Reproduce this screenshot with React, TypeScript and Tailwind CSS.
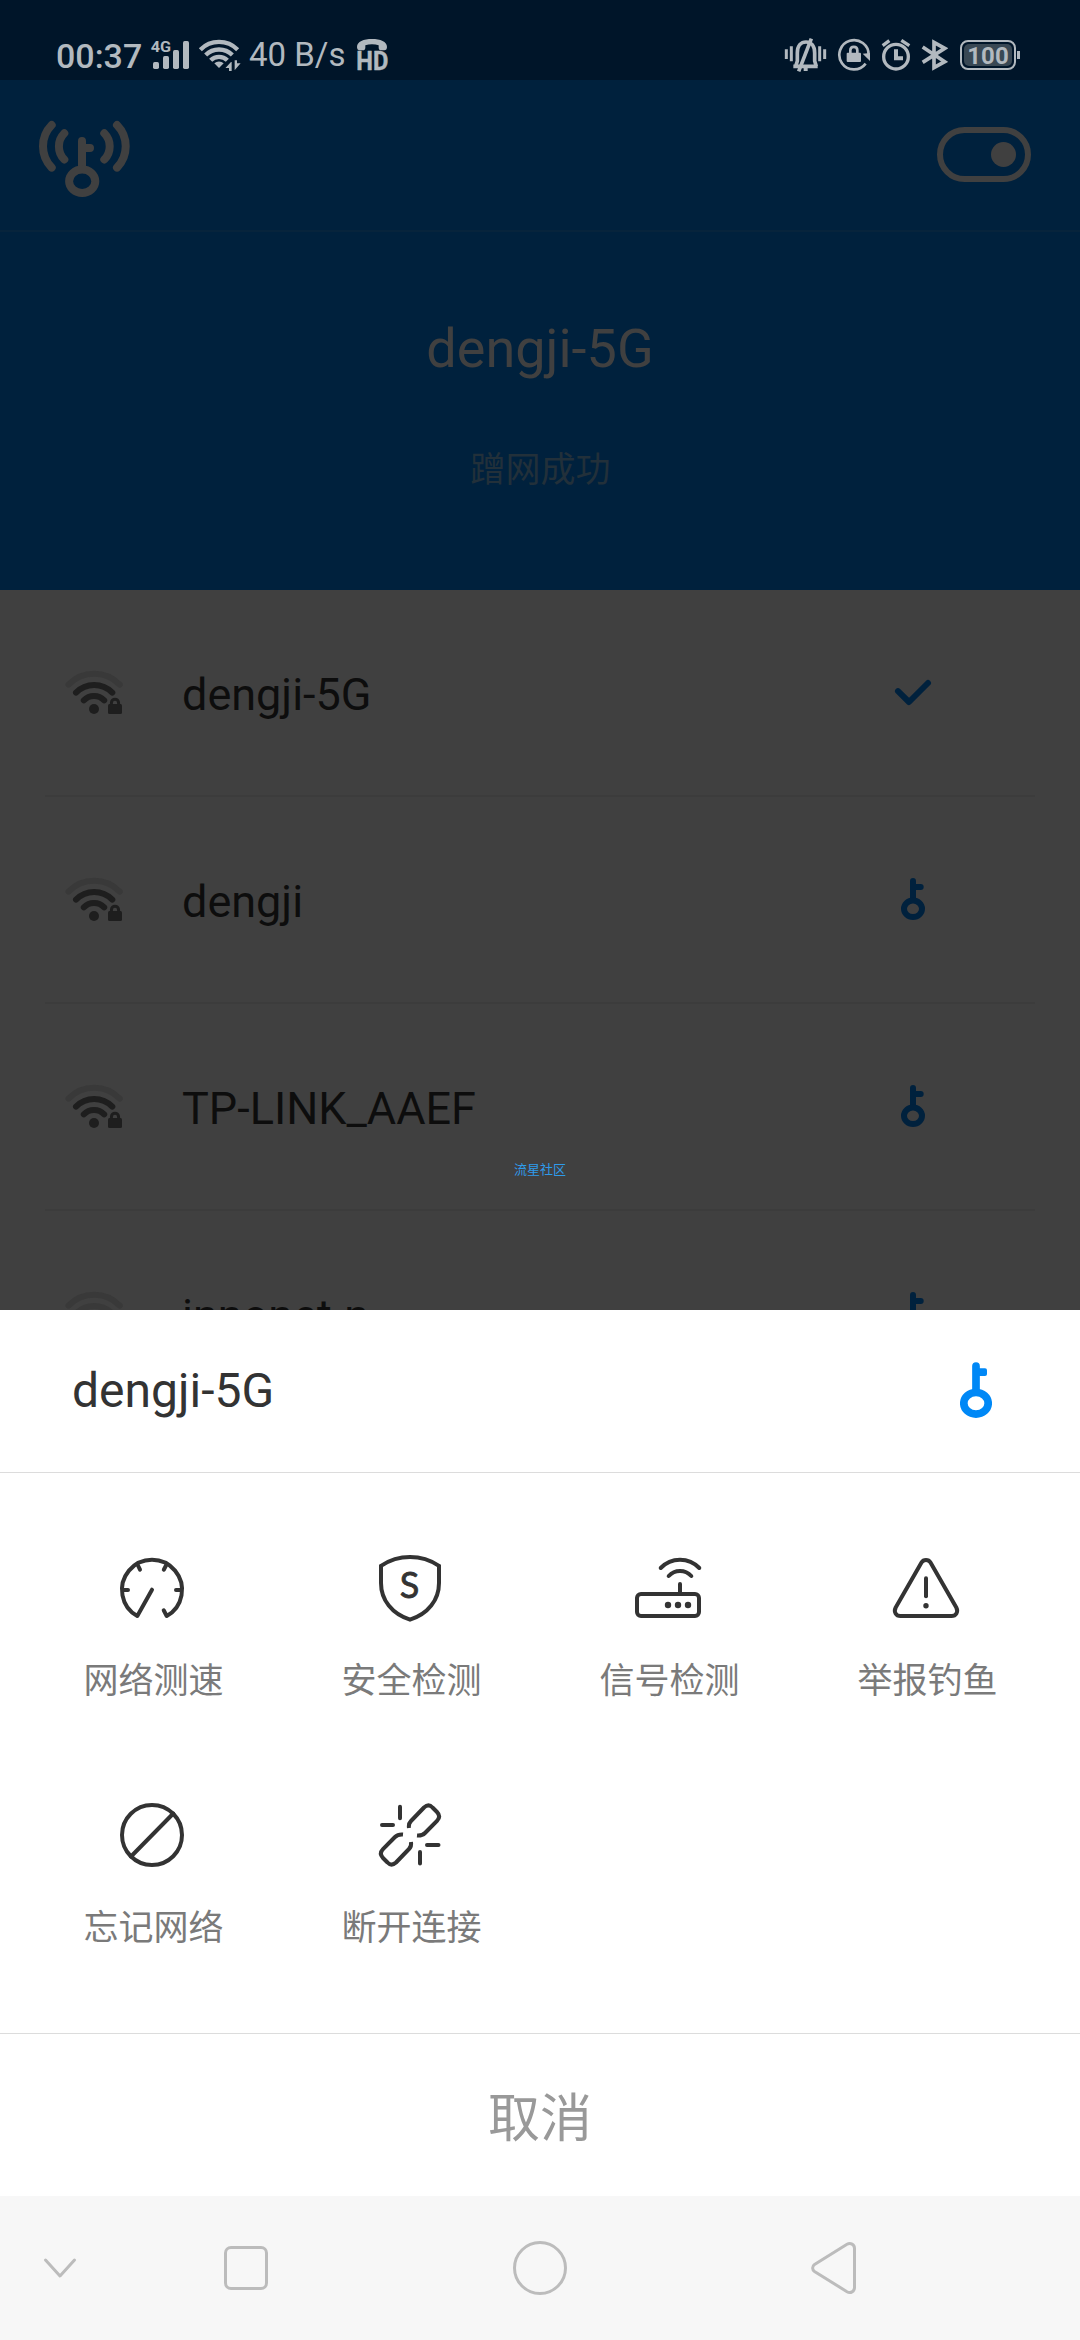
import type { ReactNode } from 'react'

const networks = [
  { name: 'dengji-5G', connected: true, weak: false },
  { name: 'dengji', connected: false, weak: false },
  { name: 'TP-LINK_AAEF', connected: false, weak: false },
  { name: 'innonet-n', connected: false, weak: true },
]

/* Status bar icons */
function SignalIcon() {
  return (
    <svg viewBox="450 108 126 114" className="w-[42px] h-[38px]" fill="#b2b9bf">
      <text x="452" y="155" fontSize="43" fontWeight="700" fontFamily="Roboto, sans-serif" textLength="61" lengthAdjust="spacingAndGlyphs">4G</text>
      <rect x="459" y="186" width="18" height="21" rx="5" />
      <rect x="489" y="168" width="18" height="39" rx="5" />
      <rect x="519" y="150" width="18" height="57" rx="5" />
      <rect x="549" y="123" width="18" height="84" rx="5" />
    </svg>
  )
}

function StatusWifiIcon() {
  return (
    <svg viewBox="594 108 135 114" className="w-[45px] h-[38px]" fill="none" stroke="#b2b9bf" strokeWidth="13">
      <path d="M601 149a79 79 0 0 1 112 0" />
      <path d="M617 165a57 57 0 0 1 80 0" />
      <path d="M632 181a35 35 0 0 1 50 0" />
      <path d="M657 204l-14-14a20 20 0 0 1 28 0z" fill="#b2b9bf" stroke="none" />
      <path d="M672 206l25-27v36h-12v-9zM702 179h11v9h13l-24 28z" fill="#b2b9bf" stroke="#001529" strokeWidth="4" />
    </svg>
  )
}

function HdCallIcon() {
  return (
    <svg viewBox="1065 108 105 114" className="w-[35px] h-[38px] overflow-visible" fill="#b2b9bf">
      <path d="M1071 141c0-16 20-24 45-24s45 8 45 24c0 6-3 10-8 10h-9c-5 0-8-3-8-8v-7c-12-4-28-4-40 0v7c0 5-3 8-8 8h-9c-5 0-8-4-8-10z" />
      <text x="1069" y="210" fontSize="78" fontWeight="700" fontFamily="Roboto, sans-serif" textLength="96" lengthAdjust="spacingAndGlyphs" stroke="#b2b9bf" strokeWidth="1.500">HD</text>
    </svg>
  )
}

function MutedBellIcon() {
  return (
    <svg viewBox="132 108 129 114" className="w-[43px] h-[38px]" fill="none" stroke="#b2b9bf" strokeWidth="9">
      <path d="M139 148v29M154 139v45M239 139v45M254 148v29" />
      <path d="M160 199h73M167 199l5-16v-24c0-22 11-33 26-33s26 11 26 33v24l5 16" strokeWidth="11" />
      <path d="M176 214l38-98" strokeWidth="11" />
      <path d="M191 204h12v9h-12z" fill="#b2b9bf" stroke="none" />
    </svg>
  )
}

function RotationLockIcon() {
  return (
    <svg viewBox="291 108 102 114" className="w-[34px] h-[38px]" fill="none" stroke="#b2b9bf" strokeWidth="8">
      <path d="M386 165a44 44 0 1 0-9 26" />
      <path d="M368 161l22-2v24z" fill="#b2b9bf" stroke="none" />
      <rect x="320" y="158" width="43" height="28" rx="3" fill="#b2b9bf" stroke="none" />
      <path d="M331 160v-9c0-14 21-14 21 0v9" />
    </svg>
  )
}

function AlarmIcon() {
  return (
    <svg viewBox="420 108 96 114" className="w-[32px] h-[38px]" fill="none" stroke="#b2b9bf" strokeWidth="10">
      <circle cx="468" cy="170" r="37" />
      <path d="M428 137l20-15M508 137l-24-16" />
      <path d="M468 148v27h21" strokeWidth="12" />
    </svg>
  )
}

function BluetoothIcon() {
  return (
    <svg viewBox="540 108 84 114" className="w-[28px] h-[38px]" fill="none" stroke="#b2b9bf" strokeWidth="11">
      <path d="M548 141l66 44-32 18v-76l32 18-66 42" />
    </svg>
  )
}

/* App icons */
function LogoIcon() {
  return (
    <svg viewBox="36 118 96 82" className="w-[96px] h-[82px]" fill="none" stroke="#404040" strokeWidth="8" strokeLinecap="round">
      <path d="M51.700 125a30.400 30.400 0 0 0 0 42.600M117 125a30.400 30.400 0 0 1 0 42.600" />
      <path d="M64.300 133.300a18.600 18.600 0 0 0 0 26.200M104.300 133.300a18.600 18.600 0 0 1 0 26.200" />
      <path d="M82 141v27M82 148h8" />
      <ellipse cx="82.200" cy="181.300" rx="13.100" ry="11.700" />
    </svg>
  )
}

function WifiLockIcon({ weak }: { weak: boolean }) {
  return (
    <svg viewBox="64 668 60 49" className="w-[60px] h-[49px]" fill="none" stroke="#1e1e1e" strokeWidth="6" strokeLinecap="round">
      <path d="M68.500 684.600a35.700 35.700 0 0 1 51.200 0" stroke="#393939" />
      <path d="M76 692.600a25.300 25.300 0 0 1 36.300 0" stroke={weak ? '#393939' : '#1e1e1e'} />
      <path d="M83.800 700.300a14.200 14.200 0 0 1 20.400 0" />
      <circle cx="94" cy="709" r="5" fill="#1e1e1e" stroke="none" />
      <rect x="108" y="704" width="14" height="10" rx="1.500" fill="#1e1e1e" stroke="none" />
      <path d="M111.400 704.500v-1.500c0-5 7.200-5 7.200 0v1.500" strokeWidth="3" strokeLinecap="butt" />
    </svg>
  )
}

function CheckIcon() {
  return (
    <svg viewBox="889 671 48 43" className="w-[48px] h-[43px]" fill="none" stroke="#00213d" strokeWidth="6" strokeLinecap="round" strokeLinejoin="round">
      <path d="M898 691.200l11 10.800 19-19" />
    </svg>
  )
}

function KeyIcon() {
  return (
    <svg viewBox="889 878 48 43" className="w-[48px] h-[43px]" fill="none" stroke="#00213d" strokeWidth="6" strokeLinecap="round">
      <path d="M913 881v18M913 887h7.700" />
      <ellipse cx="913" cy="908.800" rx="9" ry="8.300" />
    </svg>
  )
}

function SheetKeyIcon() {
  return (
    <svg viewBox="960 1362 32 56" className="w-[32px] h-[56px]" fill="none" stroke="#0088f6" strokeWidth="7.700">
      <path d="M976 1366v26" strokeLinecap="round" />
      <path d="M976 1368.200h9a2 2 0 0 1 2 2v3.700a2 2 0 0 1-2 2h-9z" fill="#0088f6" stroke="none" />
      <ellipse cx="976" cy="1403.300" rx="12.200" ry="10.800" />
    </svg>
  )
}

function ActionIcon({ children }: { children: ReactNode }) {
  return (
    <svg viewBox="0 0 72 72" className="w-[72px] h-[72px]" fill="none" stroke="#333333" strokeWidth="4" strokeLinecap="round" strokeLinejoin="round">
      {children}
    </svg>
  )
}

const halfLink =
  'M35 27c-.5-3 .5-5.500 2-7L50 6.500c3-2.700 6-2.700 8.500 0L63 11c2.700 2.800 2.700 6 0 8.800L51 32c-2 2-4.500 2.800-8 2.500'

const actions = [
  {
    label: '网络测速',
    icon: (
      <>
        <path d="M36 35.700L21.300 62a30 30 0 1 1 29.400 0l-3-5.700" />
        <path d="M7 36h5M60 36h5M22 11.500l2 4.200M50 11.500l-2.200 4.200" />
      </>
    ),
  },
  {
    label: '安全检测',
    icon: (
      <>
        <path d="M7 11.800C15 6.500 25 3 36 3s21 3.500 29 8.800V29c0 17-11 31-29 36.700C18 60 7 46 7 29z" strokeLinejoin="miter" />
        <text x="35.500" y="44" textAnchor="middle" fontSize="36" fontFamily="Lato, sans-serif" fontWeight="400" fill="#333333" strokeWidth="0.800">S</text>
      </>
    ),
  },
  {
    label: '信号检测',
    icon: (
      <>
        <rect x="5" y="40" width="62" height="22" rx="4" />
        <path d="M48 30v10M28.700 14a26.600 26.600 0 0 1 38.600 0M36.700 22a15.300 15.300 0 0 1 22.600 0" />
        <g fill="#333333" stroke="none">
          <circle cx="36" cy="51" r="3.200" />
          <circle cx="46" cy="51" r="3.200" />
          <circle cx="56" cy="51" r="3.200" />
        </g>
      </>
    ),
  },
  {
    label: '举报钓鱼',
    icon: (
      <>
        <path d="M31.500 8.500c2-3.300 7-3.300 9 0l25.800 45c2.200 4.500-.3 8.500-4.800 8.500h-51c-4.500 0-7-4-4.800-8.500z" />
        <path d="M36 24.300v18" />
        <circle cx="36" cy="51.700" r="2.700" fill="#333333" stroke="none" />
      </>
    ),
  },
  {
    label: '忘记网络',
    icon: (
      <>
        <circle cx="36" cy="34" r="30" />
        <path d="M57.300 12.500L15 55.500" />
      </>
    ),
  },
  {
    label: '断开连接',
    icon: (
      <>
        <path d="M26 5.800v11.500M8 24h11M53 44h11.500M46 51v11.500" />
        <path strokeLinecap="butt" d={halfLink} />
        <path strokeLinecap="butt" transform="rotate(180 36 34)" d={halfLink} />
      </>
    ),
  },
]

function StatusBar() {
  return (
    <div className="h-[80px] bg-[#001529] flex items-start justify-between pt-9 pl-[56px] pr-[60px] text-[#b2b9bf]">
      <div className="flex items-start">
        <span className="w-[94px] text-[34px] leading-[40px] font-medium whitespace-nowrap">00:37</span>
        <SignalIcon />
        <div className="ml-[6px]"><StatusWifiIcon /></div>
        <span className="-mt-px ml-[6px] w-[106px] text-[33px] leading-[40px] whitespace-nowrap">40 B/s</span>
        <HdCallIcon />
      </div>
      <div className="flex items-start">
        <MutedBellIcon />
        <div className="ml-[10px]"><RotationLockIcon /></div>
        <div className="ml-[9px]"><AlarmIcon /></div>
        <div className="ml-[8px]"><BluetoothIcon /></div>
        <div className="ml-3 mt-1 flex items-center">
          <div className="w-[56px] h-[30px] rounded-[8px] border-2 border-[#b2b9bf] p-[2px]">
            <div className="w-full h-full rounded-[5px] bg-[#394854] flex items-center justify-center pt-px text-[24px] leading-[22px] font-bold">100</div>
          </div>
          <div className="ml-px w-[3px] h-2 bg-[#b2b9bf]" />
        </div>
      </div>
    </div>
  )
}

export default function App() {
  return (
    <div className="relative w-[1080px] h-[2340px] flex flex-col overflow-hidden bg-white font-['Roboto','Noto_Sans_CJK_SC',sans-serif]">
      <StatusBar />

      {/* Header */}
      <header className="h-[510px] bg-[#00213d]">
        <div className="h-[152px] border-b-2 border-[#07243c] flex items-start justify-between pl-9 pr-[49px]">
          <div className="pt-[38px]"><LogoIcon /></div>
          <div className="mt-[47px] w-[94px] h-[55px] rounded-full border-6 border-[#404040] flex items-center justify-end pr-[9px]">
            <div className="w-[25px] h-[25px] rounded-full bg-[#404040]" />
          </div>
        </div>
        <div className="pt-[85px] flex flex-col items-center">
          <h1 className="text-[54px] leading-[64px] text-[#404040]">dengji-5G</h1>
          <p className="mt-[70px] pl-px text-[35px] leading-[40px] text-[#22303a]">蹭网成功</p>
        </div>
      </header>

      {/* Network list */}
      <ul className="h-[720px] overflow-hidden bg-[#404040]">
        {networks.map((network) => (
          <li key={network.name} className="h-[207px] mx-[45px] border-b-2 border-[#3c3c3c] flex items-center pl-[19px] pr-[98px]">
            <WifiLockIcon weak={network.weak} />
            <span className="flex-1 pl-[58px] pt-1 text-[45px] leading-[54px] text-[#0d0d0d]">{network.name}</span>
            {network.connected ? <CheckIcon /> : <KeyIcon />}
          </li>
        ))}
      </ul>

      {/* Action sheet */}
      <section className="h-[886px] flex flex-col bg-white">
        <div className="h-[163px] border-b border-[#dcdcdc] flex items-center justify-between pl-[72px] pr-[88px]">
          <h2 className="text-[48px] leading-[56px] text-[#333333]">dengji-5G</h2>
          <div className="pb-[2px]"><SheetKeyIcon /></div>
        </div>
        <div className="h-[561px] border-b border-[#dcdcdc] pt-[81px] pl-[23px] pr-[25px] grid grid-cols-4 auto-rows-[247px]">
          {actions.map((action) => (
            <div key={action.label} className="flex flex-col items-center">
              <ActionIcon>{action.icon}</ActionIcon>
              <span className="mt-[36px] pl-[3px] text-[35px] leading-[40px] text-[#7a7a7a]">{action.label}</span>
            </div>
          ))}
        </div>
        <button className="flex-1 pt-[9px] text-[52px] leading-[60px] text-[#999999]">取消</button>
      </section>

      {/* Navigation bar */}
      <nav className="h-[144px] bg-[#f7f7f7] flex items-center pl-[42px]">
        <svg viewBox="0 0 36 24" className="w-[36px] h-[24px]" fill="none" stroke="#bcbcbc" strokeWidth="3" strokeLinecap="round" strokeLinejoin="round">
          <path d="M3.500 4L18 20 32.500 4" />
        </svg>
        <div className="ml-[146px] w-[44px] h-[44px] rounded-[7px] border-3 border-[#bcbcbc]" />
        <div className="ml-[245px] w-[54px] h-[54px] rounded-full border-3 border-[#bcbcbc]" />
        <svg viewBox="0 0 48 54" className="ml-[243px] w-[48px] h-[54px]" fill="none" stroke="#bcbcbc" strokeWidth="3">
          <path d="M4.500 23.500L37 3.300C40.500 1.300 44.500 3.500 44.500 7.500v39c0 4-4 6.200-7.500 4.200L4.500 30.500c-2.500-1.700-2.500-5.300 0-7z" />
        </svg>
      </nav>

      {/* Watermark floating above the list */}
      <span className="absolute left-[514px] top-[1162px] text-[13px] leading-4 text-[#2f9bea] whitespace-nowrap">流星社区</span>
    </div>
  )
}
